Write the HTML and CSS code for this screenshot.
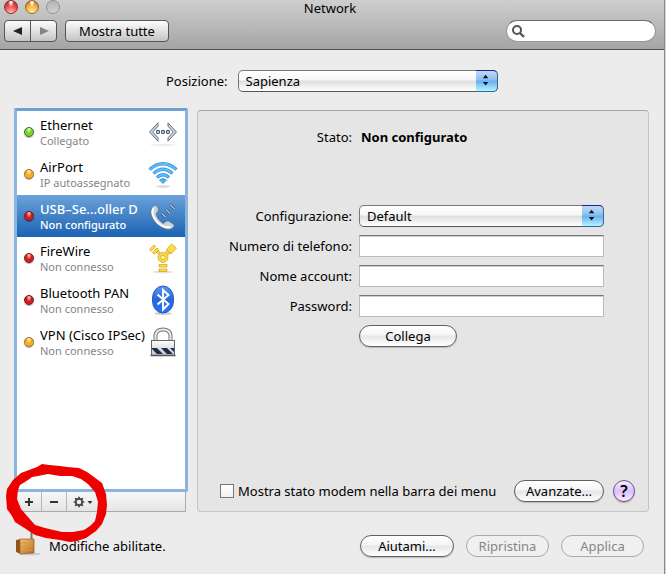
FILE: index.html
```html
<!DOCTYPE html>
<html lang="it">
<head>
<meta charset="utf-8">
<title>Network</title>
<link rel="stylesheet" href="styles.css">
</head>
<body>
<main class="window">
  <header class="chrome">
    <div class="titlebar">
      <div class="lights">
        <button class="light light-close" aria-label="Chiudi"></button>
        <button class="light light-minimize" aria-label="Contrai"></button>
        <button class="light light-off" aria-label="Ridimensiona" disabled></button>
      </div>
      <h1 class="title">Network</h1>
    </div>
    <div class="toolbar">
      <div class="history">
        <button class="tool" aria-label="Indietro"><svg width="10" height="10" viewBox="0 0 10 10"><path d="M9 1v8L0 5z" fill="#222"/></svg></button>
        <button class="tool" aria-label="Avanti" disabled><svg width="10" height="10" viewBox="0 0 10 10"><path d="M1 1v8l9-4z" fill="#858585"/></svg></button>
      </div>
      <button class="tool tool-text">Mostra tutte</button>
      <label class="search">
        <svg width="14" height="14" viewBox="0 0 14 14" fill="none" stroke="#555"><circle cx="6" cy="6" r="4" stroke-width="2"/><path d="M9 9l4 4" stroke-width="2.4"/></svg>
        <input type="search" aria-label="Cerca">
      </label>
    </div>
  </header>

  <div class="location">
    <label for="location">Posizione:</label>
    <div class="popup">
      <select id="location"><option>Sapienza</option></select>
      <svg class="popup-cap" width="22" height="22" viewBox="0 0 22 22"><path d="M10 4l3 4H7zM10 16l3-4H7z" fill="#0b1420"/></svg>
    </div>
  </div>

  <div class="columns">
    <section class="sidebar">
      <ul class="services">
        <li><button class="service">
          <span class="dot dot-green"></span>
          <span class="service-text"><span class="service-name">Ethernet</span><span class="service-state">Collegato</span></span>
          <svg class="service-icon" width="30" height="32" viewBox="0 0 30 32">
            <ellipse cx="15" cy="29" rx="13" ry="1.200" fill="#eee"/>
            <path d="M10 6.800L1.500 16l8.500 9.200v-3.400L4.800 16 10 10.200zM20 6.800l8.500 9.200-8.500 9.200v-3.400l5.200-5.800-5.200-5.800z" fill="#c9d3e0" stroke="#59677d" stroke-width=".9"/>
            <g fill="#e4eaf2" stroke="#43516a" stroke-width="1.100"><circle cx="10" cy="16" r="1.600"/><circle cx="15" cy="16" r="1.600"/><circle cx="20" cy="16" r="1.600"/></g>
          </svg>
        </button></li>
        <li><button class="service">
          <span class="dot dot-amber"></span>
          <span class="service-text"><span class="service-name">AirPort</span><span class="service-state">IP autoassegnato</span></span>
          <svg class="service-icon" width="30" height="32" viewBox="0 0 30 32">
            <ellipse cx="15" cy="28.500" rx="7" ry="1.500" fill="#ddd"/>
            <g fill="none" stroke="#2c91dd" stroke-width="3.200"><path d="M1.500 11.500Q15 0 28.500 11.500M5.500 15.500Q15 7 24.500 15.500M9 19.500Q15 14 21 19.500"/></g>
            <g fill="none" stroke="#62bdf7" stroke-width="1.800"><path d="M2 11.200Q15 .2 28 11.200M6 15.200Q15 7.200 24 15.200M9.500 19.200Q15 14.200 20.500 19.200"/></g>
            <path d="M11.500 22Q15 19 18.500 22L15 25.500z" fill="#50b1f2" stroke="#2c91dd" stroke-width=".8"/>
          </svg>
        </button></li>
        <li><button class="service service-selected" aria-current="true">
          <span class="dot dot-red"></span>
          <span class="service-text"><span class="service-name">USB–Se...oller D</span><span class="service-state">Non configurato</span></span>
          <svg class="service-icon" width="30" height="32" viewBox="0 0 30 32">
            <path d="M5 6Q9 3.500 10.500 9.500Q10.500 12.500 8 13.500Q9.500 20 15.500 23.500Q18 20 20.500 21L25.500 24Q27.500 27 23 29Q17 31 9 24Q-1 13.500 5 6z" fill="#c8d2dd" stroke="#4c6c93" stroke-width=".8"/>
            <path d="M5.500 8Q2 14 9.500 22.500Q16 28.500 22.500 27" fill="none" stroke="#fbfcfd" stroke-width="2"/>
            <g stroke="#28476f" stroke-width="2.600"><path d="M14 13.500l3.500 3.500M18 9.500l4 4M22.500 5l4 4"/></g>
            <g stroke="#b5c8de" stroke-width="1.500"><path d="M14 13.500l3.500 3.500M18 9.500l4 4M22.500 5l4 4"/></g>
          </svg>
        </button></li>
        <li><button class="service">
          <span class="dot dot-red"></span>
          <span class="service-text"><span class="service-name">FireWire</span><span class="service-state">Non connesso</span></span>
          <svg class="service-icon" width="30" height="32" viewBox="0 0 30 32">
            <ellipse cx="15" cy="30" rx="10" ry="1.500" fill="#e3e3e3"/>
            <g fill="#fbdc4c" stroke="#d2a109" stroke-width=".7">
              <path d="M1.500 7.500l4.500-4.500 1.800 1.600-4.500 4.600zM4.500 10.500L9 6l1.800 1.600-4.500 4.600zM18.500 7.500l5-5.500 5 4-5.500 6zM17.500 10l1.500-1.700 3 2.700-1.700 1.700zM8.500 10.500l1.800-1.700 2 1.800-1.800 1.700z"/>
              <circle cx="15" cy="15.500" r="5"/><circle cx="15" cy="15.500" r="2.300" fill="#fff3ad"/>
              <path d="M11 22.500h8v2.500h-8zM11 27h8v2.500h-8z"/>
            </g>
          </svg>
        </button></li>
        <li><button class="service">
          <span class="dot dot-red"></span>
          <span class="service-text"><span class="service-name">Bluetooth PAN</span><span class="service-state">Non connesso</span></span>
          <svg class="service-icon" width="30" height="32" viewBox="0 0 30 32">
            <defs><linearGradient id="bt" x1="0" y1="0" x2="0" y2="1"><stop offset="0" stop-color="#5b9aec"/><stop offset=".5" stop-color="#2466e2"/><stop offset="1" stop-color="#2775fb"/></linearGradient></defs>
            <ellipse cx="15" cy="29.500" rx="9" ry="1.500" fill="#ccc"/>
            <rect x="4.500" y="2" width="21" height="27" rx="10.500" ry="12" fill="url(#bt)" stroke="#1e4fb4" stroke-width=".9"/>
            <path d="M9.500 10.500l11 9.500-5.500 5.500V6l5.500 5-11 9.500" fill="none" stroke="#fff" stroke-width="2"/>
          </svg>
        </button></li>
        <li><button class="service">
          <span class="dot dot-amber"></span>
          <span class="service-text"><span class="service-name">VPN (Cisco IPSec)</span><span class="service-state">Non connesso</span></span>
          <svg class="service-icon" width="30" height="32" viewBox="0 0 30 32">
            <defs><linearGradient id="vpn" x1="0" y1="0" x2="0" y2="1"><stop offset="0" stop-color="#fff"/><stop offset="1" stop-color="#c2c4c8"/></linearGradient></defs>
            <path d="M7.500 15V9Q8.500 3.500 15 3.500T22.500 9v6" fill="none" stroke="#777" stroke-width="4"/>
            <path d="M7.500 15V9Q8.500 3.500 15 3.500T22.500 9v6" fill="none" stroke="#e9e9e9" stroke-width="2"/>
            <rect x="3.500" y="14.500" width="23" height="15" fill="url(#vpn)" stroke="#666"/>
            <path d="M4 22h5l6 6H9L4 23zM13 22h6l6 6h-6zM22 22h4v4z" fill="#1f2d4c"/>
            <path d="M2.500 29.500h25" stroke="#555" stroke-width="1.500"/>
          </svg>
        </button></li>
      </ul>
      <div class="actions">
        <button class="action" aria-label="Aggiungi"><svg width="10" height="10" viewBox="0 0 10 10"><path d="M5 1v8M1 5h8" stroke="#333" stroke-width="2"/></svg></button>
        <button class="action" aria-label="Rimuovi"><svg width="10" height="10" viewBox="0 0 10 10"><path d="M1 5h8" stroke="#333" stroke-width="2"/></svg></button>
        <button class="action action-menu" aria-label="Azioni"><svg width="20" height="12" viewBox="0 0 20 12"><circle cx="6" cy="6" r="3.200" fill="none" stroke="#444" stroke-width="1.700"/><path d="M6 .7v2M6 9.300v2M.7 6h2M9.300 6h2M2.200 2.200l1.500 1.500M8.300 8.300l1.500 1.500M2.200 9.800l1.500-1.500M8.300 3.700l1.500-1.500" stroke="#444" stroke-width="1.700"/><path d="M14.500 5h5L17 8z" fill="#333"/></svg></button>
      </div>
      <svg class="marker" width="104" height="80" viewBox="0 0 104 80" aria-hidden="true">
        <path fill-rule="evenodd" fill="#ec0000" d="M33 4L38 1 45 2 56 3 63 4 75 5 83 9 90 14 98 20 102 31 103 42 102 51 98 61 92 68 82 75 73 78 66 79 56 77 42 75 31 72 22 66 11 59 8 53 3 46 2 33 3 26 9 17 17 10 25 7zM34 13L28 14 24 17 16 22 14 27 13 36 17 46 24 54 31 62 41 65 58 69 69 69 80 67 86 63 91 58 93 49 94 39 91 29 84 21 77 16 68 13 56 13 44 11z"/>
      </svg>
    </section>

    <form class="panel">
      <div class="form">
        <span class="label">Stato:</span>
        <strong class="status">Non configurato</strong>
        <label class="label" for="config">Configurazione:</label>
        <div class="popup">
          <select id="config"><option>Default</option></select>
          <svg class="popup-cap" width="22" height="22" viewBox="0 0 22 22"><path d="M10 4l3 4H7zM10 16l3-4H7z" fill="#0b1420"/></svg>
        </div>
        <label class="label" for="phone">Numero di telefono:</label>
        <input class="field" id="phone" type="text">
        <label class="label" for="account">Nome account:</label>
        <input class="field" id="account" type="text">
        <label class="label" for="password">Password:</label>
        <input class="field" id="password" type="password">
        <button class="push push-connect" type="button">Collega</button>
      </div>
      <div class="panel-foot">
        <label class="check"><input type="checkbox">Mostra stato modem nella barra dei menu</label>
        <button class="push push-advanced" type="button">Avanzate...</button>
        <button class="help" type="button" aria-label="Aiuto">?</button>
      </div>
    </form>
  </div>

  <footer class="footer">
    <svg class="padlock" width="26" height="30" viewBox="0 0 26 30">
      <defs><linearGradient id="brass" x1="0" y1="0" x2="1" y2="1"><stop offset="0" stop-color="#f2c274"/><stop offset="1" stop-color="#b66b1d"/></linearGradient></defs>
      <ellipse cx="14" cy="28" rx="11" ry="1.500" fill="#ccc"/>
      <path d="M15.500 14V4q1-3 4.500-3t4 4" fill="none" stroke="#777" stroke-width="2"/>
      <path d="M0 14l5-1v15l-5-2z" fill="#935219"/>
      <path d="M4 13h14v14L4 28z" fill="url(#brass)" stroke="#9a5a18" stroke-width=".7"/>
      <path d="M5 17h12M5 20.500h12M5 24h12" stroke="#d99744"/>
    </svg>
    <span class="lock-text">Modifiche abilitate.</span>
    <button class="push push-assist">Aiutami...</button>
    <button class="push push-final" disabled>Ripristina</button>
    <button class="push push-final" disabled>Applica</button>
  </footer>
</main>
<div class="desktop"></div>
</body>
</html>
```
FILE: styles.css
```css
* { box-sizing: border-box; }

body {
  display: flex;
  min-height: 100vh;
  margin: 0;
  background: #ececec;
  color: #000;
  font: 13px/16px "Lucida Grande", "Noto Sans", "Open Sans", sans-serif;
}

button, input, select { margin: 0; font: inherit; color: inherit; }
button { padding: 0; }
svg { display: block; flex: none; }

.window { flex: 1; min-width: 0; }
.desktop { width: 2px; border-left: 1px solid #888; background: #d8d8d8; }

/* Title bar and toolbar */
.chrome {
  height: 50px;
  border-bottom: 1px solid #515151;
  background: linear-gradient(#cecece, #a5a5a5);
}
.titlebar { display: grid; grid-template-columns: 1fr auto 1fr; height: 20px; }
.lights { display: flex; gap: 7px; padding-left: 4px; }
.title { margin: 0 4px 0 0; font-size: 13px; font-weight: 400; line-height: 16px; }
.light { width: 14px; height: 14px; border: 1px solid #777; border-radius: 50%; }
.light-close { border-color: #8a302f; background: radial-gradient(ellipse at 50% 10%, #fff 5%, transparent 35%), radial-gradient(circle at 50% 100%, #ffc5c0, #ed4a45 55%, #a91b1c); }
.light-minimize { border-color: #9c6427; background: radial-gradient(ellipse at 50% 10%, #fff 5%, transparent 35%), radial-gradient(circle at 50% 100%, #fff5a5, #f6b145 55%, #ac5c14); }
.light-off { border-color: #929292; background: linear-gradient(#b5b5b5, #d0d0d0); }

.toolbar { display: flex; gap: 8px; padding: 0 8px 0 4px; }
.history { display: flex; }
.tool {
  display: flex;
  align-items: center;
  justify-content: center;
  width: 27px;
  height: 22px;
  border: 1px solid #555;
  border-radius: 4px;
  background: linear-gradient(#fdfdfd, #c4c4c4);
}
.history .tool:first-child { border-radius: 4px 0 0 4px; }
.history .tool:last-child { margin-left: -1px; border-radius: 0 4px 4px 0; }
.tool-text { width: 104px; }
.search {
  display: flex;
  align-items: center;
  width: 150px;
  height: 22px;
  margin-left: auto;
  padding: 0 8px 0 4px;
  border: 1px solid #999;
  border-top-color: #6e6e6e;
  border-radius: 11px;
  background: #fff;
}
.search input { flex: 1; min-width: 0; border: 0; outline: 0; background: none; }

/* Pop-up menus */
.popup { position: relative; height: 22px; }
.popup select {
  width: 100%;
  height: 22px;
  padding: 0 28px 0 7px;
  border: 1px solid #777;
  border-bottom-color: #555;
  border-radius: 5px;
  background: linear-gradient(#fff 0, #f7f7f7 45%, #dedede 50%, #fff);
  appearance: none;
}
.popup-cap {
  position: absolute;
  top: 0;
  right: 0;
  border: 1px solid #3b6798;
  border-top-color: #20209a;
  border-left: 0;
  border-radius: 0 5px 5px 0;
  background: linear-gradient(#c0daf4, #8abef0 45%, #66aeef 50%, #b5f4ff);
  pointer-events: none;
}

.location { display: flex; align-items: center; gap: 10px; width: 50%; margin: 20px 0 16px 25%; }
.location .popup { flex: none; width: 260px; }

/* Service list */
.columns { display: flex; gap: 9px; padding: 0 15px 0 14px; }
.sidebar { position: relative; flex: none; width: 174px; }
.services {
  height: 384px;
  margin: 0;
  padding: 0;
  border: 3px solid #8bb5df;
  border-top-color: #6fa0d3;
  border-radius: 2px;
  background: #fff;
  list-style: none;
}
.service {
  display: flex;
  align-items: center;
  width: 100%;
  height: 42px;
  padding: 0 7px;
  border: 0;
  background: none;
  text-align: left;
}
.service-selected { background: linear-gradient(#6ba2da, #1b63b3); color: #fff; }
.service-text { flex: 1; min-width: 0; margin-left: 6px; white-space: nowrap; }
.service-name, .service-state { display: block; line-height: 16px; }
.service-state { color: #858585; font-size: 11px; line-height: 15px; }
.service-selected .service-name { font-weight: 500; }
.service-selected .service-state { color: #fff; font-weight: 500; }
.service-icon { margin-left: -8px; }
.dot { flex: none; width: 10px; height: 10px; border: 1px solid; border-radius: 50%; box-shadow: 0 1px 1px #aaa; }
.service-selected .dot { box-shadow: 0 1px 1px #174b86; }
.dot-green { border-color: #347018; background: radial-gradient(ellipse at 50% 15%, #e6ffd4, #70cc21 50%, #9de94d); }
.dot-amber { border-color: #9e6614; background: radial-gradient(ellipse at 50% 15%, #fff4d2, #f4a312 50%, #ffdc45); }
.dot-red { border-color: #74100f; background: radial-gradient(ellipse at 50% 15%, #ffd5d5, #cf1116 50%, #ef473e); }

.actions { display: flex; height: 20px; margin: 0 2px; border: 1px solid #aaa; border-top: 0; background: linear-gradient(#f7f7f7, #e5e5e5); }
.action { display: flex; align-items: center; justify-content: center; width: 25px; border: 0; border-right: 1px solid #b5b5b5; background: none; }
.action-menu { width: 32px; border: 0; }
.marker { position: absolute; left: -10px; bottom: -31px; pointer-events: none; }

/* Connection settings */
.panel {
  display: flex;
  flex: 1;
  flex-direction: column;
  justify-content: space-between;
  min-width: 0;
  margin-top: 2px;
  border: 1px solid #c5c5c5;
  border-top-color: #a5a5a5;
  border-radius: 4px;
  background: #e5e5e5;
}
.form { display: grid; grid-template-columns: 154px 1fr; align-items: center; gap: 8px 7px; padding: 18px 44px 0 0; }
.label { text-align: right; white-space: nowrap; }
.status { margin-left: 2px; }
.form > .label:first-child, .status { margin-bottom: 52px; }
.field { width: 100%; height: 22px; padding: 0 4px; border: 1px solid #bbb; border-top: 1px solid #757575; border-radius: 0; background: #fff; box-shadow: inset 0 1px #ccc; }

.push {
  height: 22px;
  border: 1px solid #606060;
  border-radius: 11px;
  background: linear-gradient(#fff, #f5f5f5 45%, #e6e6e6 50%, #fff);
  box-shadow: 0 1px 1px #bbb;
}
.push:disabled { border-color: #aaa; background: #f0f0f0; box-shadow: none; color: #858585; }
.push-connect { grid-column: 2; width: 98px; }
.push-advanced { flex: none; width: 90px; margin-left: auto; }
.panel-foot { display: flex; align-items: center; padding: 0 13px 9px 22px; }
.check { display: flex; align-items: center; gap: 4px; white-space: nowrap; }
.check input { width: 14px; height: 14px; border: 1px solid #777; background: linear-gradient(#fff, #f0f0f0); appearance: none; }
.help {
  flex: none;
  width: 22px;
  height: 22px;
  margin-left: 9px;
  border: 1px solid #6d5187;
  border-radius: 50%;
  background: linear-gradient(#f7efff, #d9bfff 50%, #f9eaff);
  box-shadow: 0 1px 1px #aaa;
  font-size: 16px;
  font-weight: 600;
}

.footer { display: flex; align-items: center; gap: 12px; padding: 13px 20px 16px 16px; }
.lock-text { margin-left: -5px; margin-right: auto; }
.footer .push, .footer .lock-text { margin-top: 10px; }
.push-assist { width: 94px; }
.push-final { width: 83px; }
```
